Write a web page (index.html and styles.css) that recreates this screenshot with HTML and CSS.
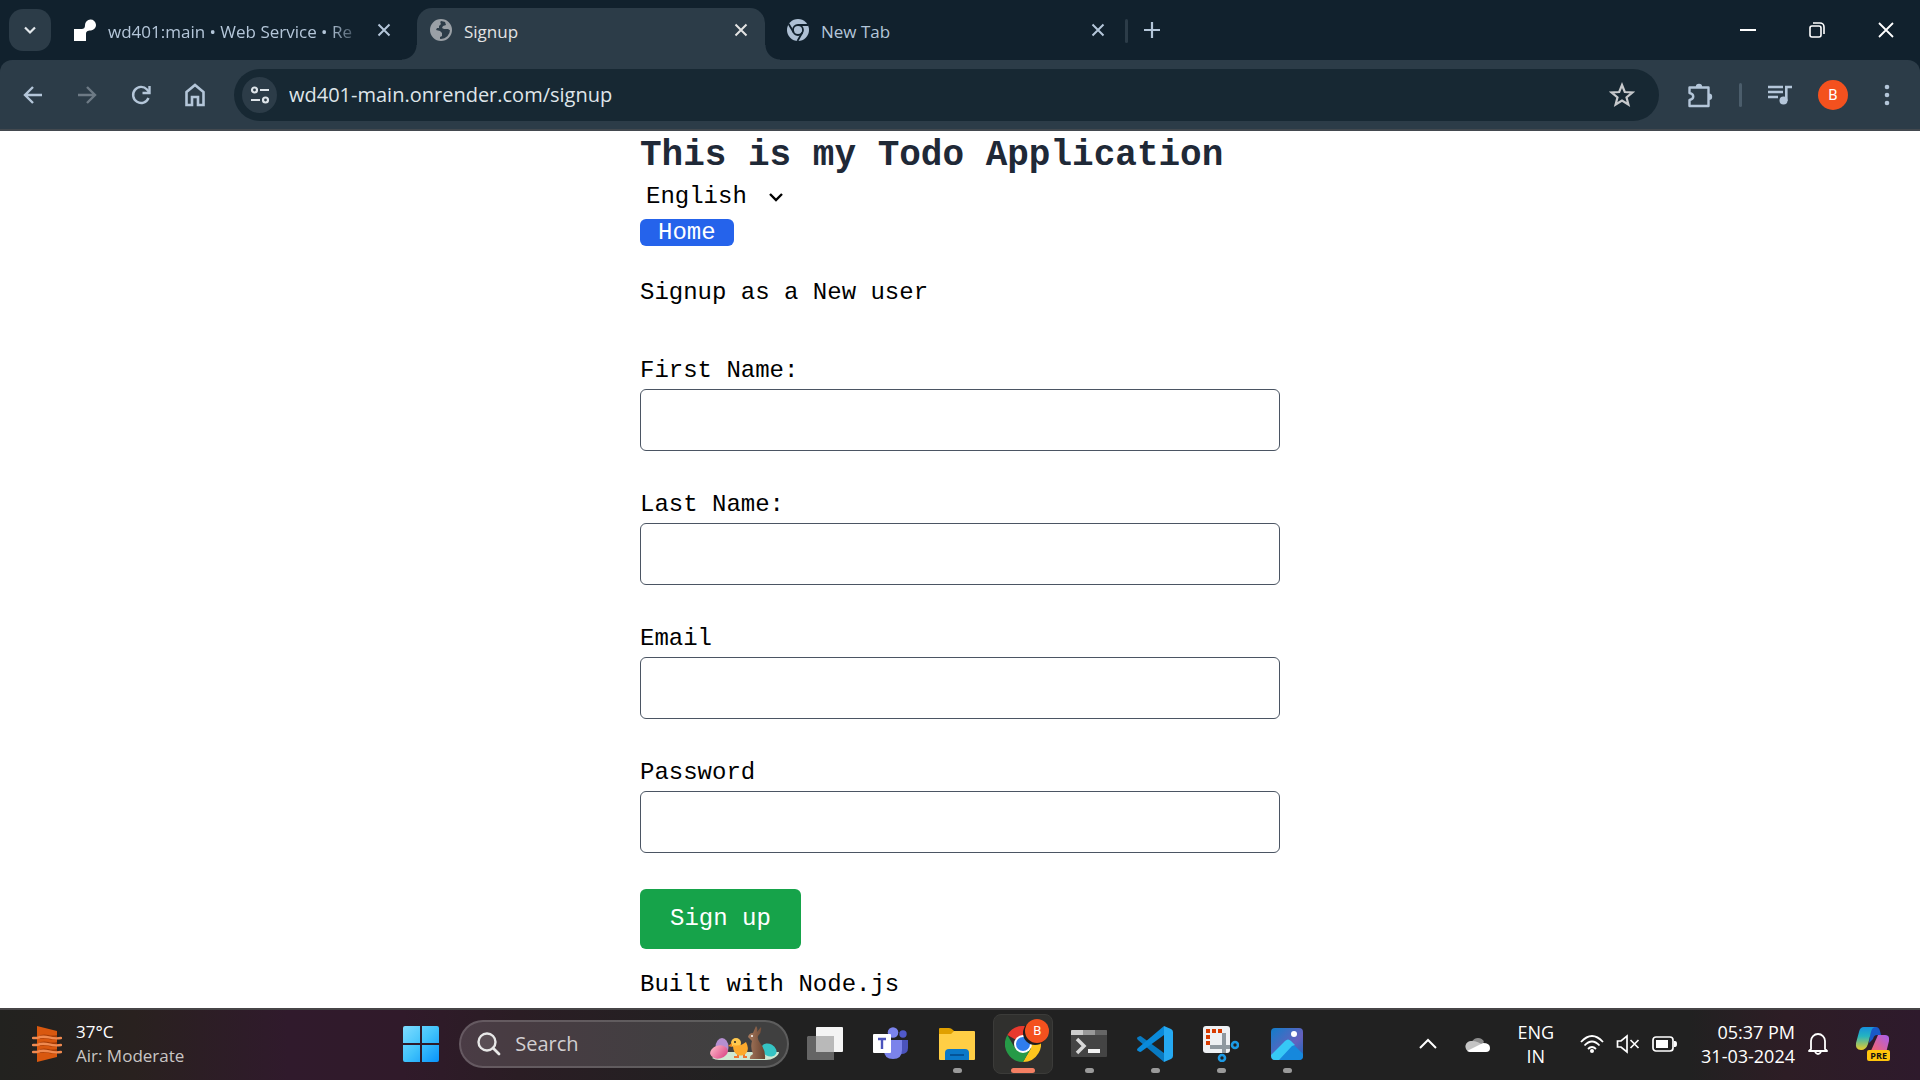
FILE: index.html
```html
<!DOCTYPE html>
<html lang="en">
<head>
<meta charset="utf-8">
<title>Signup</title>
<link rel="stylesheet" href="styles.css">
</head>
<body>
<header class="browser">
  <div class="tabstrip">
    <button class="tab-search" aria-label="Search tabs"><svg width="16" height="16" viewBox="0 0 16 16"><path d="M3 5.500l5 5 5-5" fill="none" stroke="currentColor" stroke-width="2.200"/></svg></button>
    <div class="tab before-active">
      <svg class="favicon" width="22" height="22" viewBox="0 0 22 22"><path d="M0 10h7c3 0 4-1 4-4a5.500 5.500 0 1 1 6 5.500c-4 0-5 1-5 4V22H0z" fill="#fff"/></svg>
      <span class="tab-title faded">wd401:main • Web Service • Re</span>
      <button class="close" aria-label="Close tab"><svg width="14" height="14" viewBox="0 0 14 14"><path d="M1.500 1.500l11 11M12.500 1.500l-11 11" stroke="currentColor" stroke-width="2"/></svg></button>
    </div>
    <div class="tab active">
      <svg class="favicon" width="22" height="22" viewBox="0 0 22 22"><circle cx="11" cy="11" r="10" fill="#2c3c48" stroke="#9aa0a6" stroke-width="2"/><path d="M12 1c-2 1-2 3-1 4l-2 2v2H7l-1 2 4 1 2 2v3l-2 1v3C4 20 1 16 1 11 1 5 6 1 12 1zM15 3c3 1 6 4 6 9l-3-2h-4l-2-1 1-2 3-1z" fill="#9aa0a6"/></svg>
      <span class="tab-title">Signup</span>
      <button class="close" aria-label="Close tab"><svg width="14" height="14" viewBox="0 0 14 14"><path d="M1.500 1.500l11 11M12.500 1.500l-11 11" stroke="currentColor" stroke-width="2"/></svg></button>
    </div>
    <div class="tab after-active">
      <svg class="favicon" width="22" height="22" viewBox="0 0 22 22"><circle cx="11" cy="11" r="11" fill="#aec0d4"/><circle cx="11" cy="11" r="5" fill="none" stroke="#11212d" stroke-width="1.800"/><path d="M11 6h10M6.700 13.500l-5-8.500M15.300 13.500L10.500 22" stroke="#11212d" stroke-width="1.800"/></svg>
      <span class="tab-title">New Tab</span>
      <button class="close" aria-label="Close tab"><svg width="14" height="14" viewBox="0 0 14 14"><path d="M1.500 1.500l11 11M12.500 1.500l-11 11" stroke="currentColor" stroke-width="2"/></svg></button>
    </div>
    <span class="divider"></span>
    <button class="new-tab" aria-label="New tab"><svg width="16" height="16" viewBox="0 0 16 16"><path d="M8 0v16M0 8h16" stroke="currentColor" stroke-width="2.200"/></svg></button>
    <div class="window-buttons">
      <button aria-label="Minimize"><svg width="16" height="16" viewBox="0 0 16 16"><path d="M0 8h16" stroke="#fff" stroke-width="2"/></svg></button>
      <button aria-label="Restore"><svg width="16" height="16" viewBox="0 0 16 16"><rect x="1" y="4" width="11" height="11" rx="2" fill="none" stroke="#fff" stroke-width="1.600"/><path d="M4 1h7a4 4 0 0 1 4 4v7" fill="none" stroke="#fff" stroke-width="1.600"/></svg></button>
      <button aria-label="Close"><svg width="16" height="16" viewBox="0 0 16 16"><path d="M1 1l14 14M15 1L1 15" stroke="#fff" stroke-width="1.800"/></svg></button>
    </div>
  </div>
  <div class="toolbar">
    <nav class="nav-buttons">
      <button aria-label="Back"><svg width="20" height="20" viewBox="0 0 20 20"><path d="M19 10H2M10 2l-8 8 8 8" fill="none" stroke="currentColor" stroke-width="2.400"/></svg></button>
      <button class="disabled" aria-label="Forward"><svg width="20" height="20" viewBox="0 0 20 20"><path d="M1 10h17M10 2l8 8-8 8" fill="none" stroke="currentColor" stroke-width="2.400"/></svg></button>
      <button aria-label="Reload"><svg width="22" height="22" viewBox="0 0 22 22"><path d="M18.500 14A8 8 0 1 1 17 5.500L19 8" fill="none" stroke="currentColor" stroke-width="2.400"/><path d="M19.500 2v7h-7" fill="none" stroke="currentColor" stroke-width="2.400"/></svg></button>
      <button aria-label="Home"><svg width="22" height="24" viewBox="0 0 22 24"><path d="M2.500 9L11 2l8.500 7v13H14v-8H8v8H2.500z" fill="none" stroke="currentColor" stroke-width="2.600"/></svg></button>
    </nav>
    <div class="omnibox">
      <button class="site-info" aria-label="Site information"><svg width="20" height="20" viewBox="0 0 20 20"><g fill="none" stroke="#dfe5ea" stroke-width="2.200"><circle cx="4.500" cy="5" r="2.500"/><path d="M10 5h9M1 15h9"/><circle cx="15.500" cy="15" r="2.500"/></g></svg></button>
      <input class="url" type="text" aria-label="Address" value="wd401-main.onrender.com/signup">
      <button class="star" aria-label="Bookmark"><svg width="26" height="26" viewBox="0 0 26 26"><path d="M13 3l2.800 7 7.500.500-5.800 4.800 1.900 7.200L13 18.500l-6.400 4 1.900-7.200L2.700 10.500l7.500-.5z" fill="none" stroke="#c7c9cc" stroke-width="2.200"/></svg></button>
    </div>
    <div class="actions">
      <button aria-label="Extensions"><svg width="26" height="26" viewBox="0 0 26 26"><path d="M2.500 5.500h19v18.500h-19v-6c5-1 5-6 0-7z" fill="none" stroke="currentColor" stroke-width="2.400" stroke-linejoin="round"/><path d="M8.800 5a3.200 3.200 0 0 1 6.400 0zM22 11.500a3.200 3.200 0 0 1 0 6.400z" fill="currentColor"/></svg></button>
      <span class="divider"></span>
      <button aria-label="Media controls"><svg width="24" height="22" viewBox="0 0 24 22"><path d="M0 3h15M0 8h15M0 13h10" stroke="currentColor" stroke-width="2.400"/><circle cx="15.500" cy="16.500" r="4" fill="currentColor"/><path d="M18.300 17V3H24" fill="none" stroke="currentColor" stroke-width="2.600"/></svg></button>
      <button class="avatar" aria-label="Profile">B</button>
      <button class="menu" aria-label="Menu"><svg width="6" height="24" viewBox="0 0 6 24"><g fill="currentColor"><circle cx="3" cy="4" r="2.300"/><circle cx="3" cy="12" r="2.300"/><circle cx="3" cy="20" r="2.300"/></g></svg></button>
    </div>
  </div>
</header>

<main class="page">
  <div class="container">
    <h1>This is my Todo Application</h1>
    <div class="language">
      <select aria-label="Language"><option>English</option></select>
      <svg width="14" height="14" viewBox="0 0 14 14"><path d="M1 4l6 6 6-6" fill="none" stroke="#000" stroke-width="2.400"/></svg>
    </div>
    <div class="home-row"><a class="home" href="#">Home</a></div>
    <p class="intro">Signup as a New user</p>
    <form>
      <div class="field"><label for="first">First Name:</label><input id="first" type="text"></div>
      <div class="field"><label for="last">Last Name:</label><input id="last" type="text"></div>
      <div class="field"><label for="email">Email</label><input id="email" type="email"></div>
      <div class="field"><label for="password">Password</label><input id="password" type="password"></div>
      <button class="submit" type="button">Sign up</button>
    </form>
    <p class="credit">Built with Node.js</p>
  </div>
</main>

<footer class="taskbar">
  <div class="weather">
    <svg width="30" height="36" viewBox="0 0 30 36"><path d="M5 0l20 5v26L5 36z" fill="#d9580f"/><path d="M8 9c8-2 9 2 17 0v4c-8 2-9-2-17 0zM8 16c8-2 9 2 17 0v4c-8 2-9-2-17 0zM8 23c8-2 9 2 17 0v4c-8 2-9-2-17 0z" fill="#a63c06"/><path d="M1 12h4c10-4 12 2 24 0M1 19h4c10-4 12 2 24 0M1 26h4c10-4 12 2 24 0" fill="none" stroke="#f08a50" stroke-width="2.400" stroke-linecap="round"/></svg>
    <div class="lines"><span>37°C</span><span class="muted">Air: Moderate</span></div>
  </div>
  <div class="apps">
    <button class="start" aria-label="Start"><svg width="36" height="36" viewBox="0 0 36 36"><defs><linearGradient id="win" x1="0" y1="0" x2="1" y2="1"><stop offset="0" stop-color="#7fdcff"/><stop offset=".5" stop-color="#41c3fb"/><stop offset="1" stop-color="#0893fb"/></linearGradient></defs><path d="M2 0h15v17H0V2q0-2 2-2zM19 0h15q2 0 2 2v15H19zM0 19h17v17H2q-2 0-2-2zM19 19h17v15q0 2-2 2H19z" fill="url(#win)"/></svg></button>
    <label class="search">
      <svg width="24" height="24" viewBox="0 0 24 24"><circle cx="10" cy="10" r="8.500" fill="#ffffff18" stroke="#e8e8e8" stroke-width="2.400"/><path d="M16 16l6 6" stroke="#e8e8e8" stroke-width="2.800" stroke-linecap="round"/></svg>
      <input type="text" placeholder="Search" aria-label="Search">
      <svg width="70" height="36" viewBox="0 0 70 36"><defs><linearGradient id="choc" x1="0" x2="1"><stop offset="0" stop-color="#a5785c"/><stop offset="1" stop-color="#684330"/></linearGradient><linearGradient id="pink" x1="0" y1="0" x2="1" y2="1"><stop offset="0" stop-color="#ffc0cc"/><stop offset="1" stop-color="#d83c80"/></linearGradient></defs><path d="M3 32q6-6 16-6h51q0 3-5 6-3 2-8 2H10q-4 0-7-2z" fill="#cfe8d2"/><ellipse cx="13" cy="21" rx="6.500" ry="9" fill="#b58fd0"/><ellipse cx="10" cy="26" rx="9" ry="6.500" transform="rotate(-15 10 26)" fill="url(#pink)"/><ellipse cx="60" cy="24" rx="8" ry="6" transform="rotate(30 60 24)" fill="#35c4c4"/><path d="M29 27v4h-4M35 27v4h3" stroke="#ef7430" stroke-width="2" fill="none"/><circle cx="27" cy="17" r="5" fill="#ffc84e"/><path d="M24 19q7 2 13-3 3 6 1 10-3 5-9 3-5-2-5-10z" fill="#fca92c"/><path d="M23 17l-4 3 4 1z" fill="#f08b20"/><circle cx="26" cy="16" r="1" fill="#222"/><path d="M41 33q-1-3 3-5-3-7-1-13l-4-4q1-4 5-4l3-7q2 2 1 6l4-5q1 5-3 9-1 3 2 7 6 7 5 16z" fill="url(#choc)"/><circle cx="43" cy="10" r="1" fill="#fff"/></svg>
    </label>
    <button class="app" aria-label="Task view"><svg width="36" height="36" viewBox="0 0 36 36"><path d="M1 10h26v24H1q-1 0-1-1V11z" fill="#656565"/><rect x="9" y="1" width="27" height="25" rx="1" fill="#f4f4f4"/><path d="M9 10h18v16H9z" fill="#b9b9b9"/></svg></button>
    <button class="app" aria-label="Teams"><svg width="36" height="36" viewBox="0 0 36 36"><circle cx="30" cy="8" r="3.700" fill="#5059c9"/><path d="M25 14h10v8q0 6-7 6h-3z" fill="#4b53bc"/><circle cx="20" cy="6.500" r="5.300" fill="#7b83eb"/><path d="M11 14h18v10q0 9-9 9t-9-9z" fill="#7b83eb"/><rect y="8" width="18" height="19" rx="1" fill="#fff"/><path d="M5 13h8M9 13v10" stroke="#4b53bc" stroke-width="2.400"/></svg></button>
    <button class="app open" aria-label="File Explorer"><svg width="36" height="36" viewBox="0 0 36 36"><path d="M0 3q0-1 1-1h9q2 0 4 2l2 2v4H0z" fill="#e0a000"/><path d="M0 8h12l3-3h20q1 0 1 1v27q0 1-1 1H1q-1 0-1-1z" fill="#ffce45"/><path d="M6 34V27q0-4 4-4h16q4 0 4 4v7z" fill="#0b78c8"/><path d="M11 29h14" stroke="#045397" stroke-width="2"/></svg></button>
    <button class="app open current" aria-label="Chrome"><svg width="36" height="36" viewBox="0 0 36 36"><path d="M18 18L2.400 9A18 18 0 0 1 33.600 9z" fill="#e8392e"/><path d="M18 9h15.600A18 18 0 0 1 18 36l7.800-13.500z" fill="#fcc51d"/><path d="M2.400 9L10.200 22.500 25.800 22.500 18 36A18 18 0 0 1 2.400 9z" fill="#269a47"/><circle cx="18" cy="18" r="9" fill="#fff"/><circle cx="18" cy="18" r="7" fill="#2f7ded"/></svg><span class="badge">B</span></button>
    <button class="app open" aria-label="Terminal"><svg width="36" height="36" viewBox="0 0 36 36"><rect y="4" width="36" height="27" rx="1" fill="#444"/><path d="M0 9V5q0-1 1-1h11v5z" fill="#ccc"/><path d="M12 4h12v5H12z" fill="#999"/><path d="M24 4h11q1 0 1 1v4H24z" fill="#666"/><path d="M6 13l7 7-7 7" fill="none" stroke="#d8d8d8" stroke-width="3.500"/><path d="M17 23h12v4H17z" fill="#f2f2f2"/></svg></button>
    <button class="app open" aria-label="Visual Studio Code"><svg width="36" height="36" viewBox="0 0 36 36"><path d="M1 14q-2-2 0-3l2-1q1 0 2 1l22 16v9z" fill="#087ac2"/><path d="M1 22q-2 2 0 3l2 1q1 0 2-1L27 9V0z" fill="#0a8ada"/><path d="M27 0l7 3q2 1 2 3v24q0 2-2 3l-7 3z" fill="#25a9f2"/></svg></button>
    <button class="app open" aria-label="Snipping Tool"><svg width="36" height="36" viewBox="0 0 36 36"><rect width="27" height="27" rx="3" fill="#eef0f3"/><path d="M3 5h16M5 9v10" stroke="#d83b01" stroke-width="4" stroke-dasharray="4 2"/><path d="M21 7v20M7 21h20" stroke="#8f989f" stroke-width="4"/><g fill="none" stroke="#1c9be6" stroke-width="2.600"><circle cx="32" cy="19" r="3"/><circle cx="19" cy="32" r="3"/></g></svg></button>
    <button class="app open" aria-label="Photos"><svg width="32" height="32" viewBox="0 0 32 32"><defs><linearGradient id="sky" x1="0" y1="0" x2="1" y2="1"><stop offset="0" stop-color="#107ecb"/><stop offset=".6" stop-color="#6560bd"/><stop offset="1" stop-color="#1169be"/></linearGradient></defs><rect width="32" height="32" rx="4" fill="url(#sky)"/><path d="M8 32l12-14q2-2 4 0l8 8v2q0 4-4 4z" fill="#1688dc"/><path d="M0 27L14 13q3-3 6 0l4 4-3 1L8 32H4q-4 0-4-5z" fill="#36c8f6"/><circle cx="23" cy="6" r="3" fill="#fff"/></svg></button>
  </div>
  <div class="tray">
    <button aria-label="Show hidden icons"><svg width="18" height="12" viewBox="0 0 18 12"><path d="M1 10l8-8 8 8" fill="none" stroke="#fff" stroke-width="2"/></svg></button>
    <button class="cloud" aria-label="OneDrive"><svg width="26" height="18" viewBox="0 0 26 18"><path d="M7 7a6.500 6.500 0 0 1 12 0l-6 6z" fill="#8d8d8d"/><path d="M5 17a5.500 5.500 0 0 1 2-11q6 0 12 5L9 17z" fill="#c4c4c4"/><path d="M2 16l16-8q7 0 7 5 0 4-4 4H5z" fill="#fff"/></svg></button>
    <div class="lines language-tray"><span>ENG</span><span>IN</span></div>
    <button class="status" aria-label="Network, volume and battery">
      <svg width="24" height="20" viewBox="0 0 24 20"><g fill="none" stroke="#fff" stroke-width="1.800"><path d="M1 8q11-12 22 0M4.500 11.500q7.500-8 15 0M8 15q4-4 8 0"/></g><circle cx="12" cy="17" r="2" fill="#fff"/></svg>
      <svg width="24" height="20" viewBox="0 0 24 20"><path d="M1.500 7H5l6-5v16l-6-5H1.500zM14.500 6l8 8M22.500 6l-8 8" fill="none" stroke="#fff" stroke-width="1.700"/></svg>
      <svg width="25" height="18" viewBox="0 0 25 18"><rect x="1" y="2" width="20" height="14" rx="3" fill="none" stroke="#fff" stroke-width="1.700"/><path d="M4 5h12v8H4z" fill="#fff"/><path d="M22 6h1q2 0 2 3t-2 3h-1z" fill="#fff"/></svg>
    </button>
    <div class="lines clock"><span>05:37 PM</span><span>31-03-2024</span></div>
    <button aria-label="Notifications"><svg width="20" height="24" viewBox="0 0 20 24"><path d="M3 17V9a7 7 0 0 1 14 0v8l2 2H1zM7 20q3 4 6 0" fill="none" stroke="#fff" stroke-width="1.800" stroke-linejoin="round"/></svg></button>
    <button class="copilot" aria-label="Copilot"><svg width="34" height="34" viewBox="0 0 34 34"><defs><linearGradient id="cpa" x1="0" y1="0" x2="0" y2="1"><stop offset="0" stop-color="#168fdd"/><stop offset=".4" stop-color="#24b4c0"/><stop offset="1" stop-color="#edcc28"/></linearGradient><linearGradient id="cpb" x1="1" y1="0" x2="0" y2="1"><stop offset="0" stop-color="#a75df0"/><stop offset="1" stop-color="#ff665a"/></linearGradient></defs><path d="M16 0h5q3 0 4 4l1 4h-4q-3 0-4 4l-4 4z" fill="#1859c8"/><path d="M9 0h12q-4 0-5 5l-3 12q-2 6-7 6-6 0-5-7L4 5q1-5 5-5z" fill="url(#cpa)"/><path d="M23 8h7q5 0 4 6l-3 12H15z" fill="url(#cpb)"/></svg><span class="pre">PRE</span></button>
  </div>
</footer>
</body>
</html>
```
FILE: styles.css
```css
* { box-sizing: border-box; }
body {
  margin: 0;
  min-height: 100vh;
  display: flex;
  flex-direction: column;
  background: #fff;
  font-family: "Open Sans", "Noto Sans", sans-serif;
}
button { padding: 0; border: 0; background: none; color: inherit; font: inherit; display: flex; align-items: center; justify-content: center; }
svg { display: block; flex: none; }
p, h1 { margin: 0; }

/* Browser chrome */
.browser { background: #11212d; color: #b4c6d9; border-bottom: 2px solid #43494f; }
.tabstrip { display: flex; align-items: flex-start; height: 60px; padding: 8px 0 0 9px; }
.tab-search { width: 42px; height: 42px; margin: 1px 10px 0 0; border-radius: 14px; background: #2c3c48; color: #e3e8ec; }
.tab { position: relative; display: flex; align-items: center; width: 348px; height: 52px; padding: 0 17px 8px 13px; border-radius: 15px 15px 0 0; }
.tab.before-active { width: 356px; padding-right: 26px; }
.tab.after-active { padding-left: 22px; padding-right: 8px; }
.tab-title { flex: 1; margin: 3px 12px 0; font-size: 17px; line-height: 24px; white-space: nowrap; }
.tab-title.faded { -webkit-mask-image: linear-gradient(90deg, #000 86%, transparent); mask-image: linear-gradient(90deg, #000 86%, transparent); }
.tab.active { background: #2c3c48; color: #e3e3e3; }
.tab.active::before, .tab.active::after { content: ""; position: absolute; bottom: 0; width: 15px; height: 15px; }
.tab.active::before { right: 100%; background: radial-gradient(circle at 0 0, transparent 14px, #2c3c48 15px); }
.tab.active::after { left: 100%; background: radial-gradient(circle at 100% 0, transparent 14px, #2c3c48 15px); }
.divider { width: 3px; height: 24px; background: #2c3c48; border-radius: 2px; }
.tabstrip .divider { margin: 11px 16px 0 12px; }
.new-tab { margin-top: 14px; }
.window-buttons { display: flex; margin-left: auto; }
.window-buttons button { width: 69px; height: 43px; }

.toolbar { display: flex; align-items: center; height: 69px; background: #2c3c48; border-radius: 12px 12px 0 0; }
.nav-buttons { display: flex; padding: 0 12px 0 6px; }
.nav-buttons button { width: 54px; height: 48px; }
.nav-buttons .disabled { color: #6d7a85; }
.omnibox { display: flex; align-items: center; flex: 1; height: 52px; padding: 0 20px 0 8px; border-radius: 26px; background: #172833; }
.site-info { width: 35px; height: 36px; border-radius: 50%; background: #2c3c48; }
.url { flex: 1; min-width: 0; padding: 0; margin-left: 12px; border: 0; outline: 0; background: none; color: #dfe5e9; font: 20px/28px "Open Sans", "Noto Sans", sans-serif; }
.star { width: 34px; }
.actions { display: flex; align-items: center; gap: 26px; padding: 0 30px 0 28px; }
.actions .divider { background: #4b5d6b; }
.avatar { width: 30px; height: 30px; border-radius: 50%; background: #f4511e; color: #fff; font: 15px/30px Roboto, sans-serif; }
.menu { padding-left: 10px; }

/* Signup page */
.page { flex: 1; font-family: "Courier New", "Liberation Mono", monospace; font-size: 24px; line-height: 36px; color: #000; }
.container { width: 640px; max-width: 100%; margin: 0 auto; }
h1 { padding-top: 3px; font-size: 36px; line-height: 44px; color: #1f2937; white-space: nowrap; }
.language { display: flex; align-items: center; position: relative; width: 150px; margin-top: 1px; }
.language select { appearance: none; width: 100%; padding: 0 6px; border: 0; background: none; color: inherit; font: inherit; }
.language svg { position: absolute; right: 7px; pointer-events: none; }
.home-row { display: flex; align-items: center; height: 35px; }
.home { padding: 0 18px; border-radius: 6px; background: #2563eb; color: #fff; line-height: 27px; text-decoration: none; }
.intro { margin: 25px 0 42px; }
.field { display: flex; flex-direction: column; margin-bottom: 36px; }
.field input { width: 100%; height: 62px; padding: 12px; border: 1px solid #4b5563; border-radius: 6px; background: #fff; font: inherit; }
.submit { height: 60px; padding: 0 30px; border-radius: 6px; background: #16a34a; color: #fff; }
.credit { margin: 18px 0 5px; }

/* Taskbar */
.taskbar { display: flex; align-items: center; height: 72px; padding-bottom: 2px; border-top: 2px solid #474547; color: #fff; font-size: 17px;
  background: linear-gradient(90deg, #22221f 0%, #29211f 7%, #301a2c 15%, #301a2a 21%, #2a1d24 27%, #212121 38%, #212121 88%, #2d1d25 93%, #2e1a2c 100%); }
.lines { display: flex; flex-direction: column; line-height: 24px; white-space: nowrap; }
.weather { display: flex; align-items: center; gap: 14px; width: 21%; padding-left: 32px; }
.muted { color: #c9c6c5; }
.apps { display: flex; align-items: center; }
.start { width: 36px; }
.search { display: flex; align-items: center; width: 330px; height: 48px; margin: 0 3px 0 20px; padding: 0 8px 0 16px; gap: 14px; border: 2px solid #ffffff28; border-radius: 24px; background: #ffffff24; }
.search input { flex: 1; min-width: 0; padding: 0; border: 0; outline: 0; background: none; color: #fff; font: 20px/28px "Open Sans", "Noto Sans", sans-serif; }
.search input::placeholder { color: #d2cfd1; opacity: 1; }
.app { position: relative; width: 60px; height: 60px; margin: 0 3px; border-radius: 8px; }
.app.current { background: #30302e; border: 1px solid #3b3b39; }
.app.open::after { content: ""; position: absolute; bottom: 1px; width: 9px; height: 5px; border-radius: 3px; background: #9a9a9a; }
.app.current::after { bottom: 0; width: 24px; background: #f47f63; }
.badge { position: absolute; top: 4px; right: 3px; width: 24px; height: 24px; border-radius: 50%; background: #f4511e; box-shadow: -2px 2px 0 #1d1d1d; color: #fff; font: 13px/24px Roboto, sans-serif; }
.tray { display: flex; align-items: center; margin-left: auto; padding-right: 31px; font-size: 18px; }
.cloud { margin: 0 26px 0 28px; }
.language-tray { text-align: center; }
.status { gap: 12px; margin: 0 24px 0 26px; }
.clock { text-align: right; margin-right: 13px; }
.copilot { position: relative; margin-left: 27px; }
.pre { position: absolute; right: -1px; bottom: 0; padding: 0 3px; border-radius: 2px; background: #ffc40c; color: #111; font-size: 9px; font-weight: 700; line-height: 11px; }
```
